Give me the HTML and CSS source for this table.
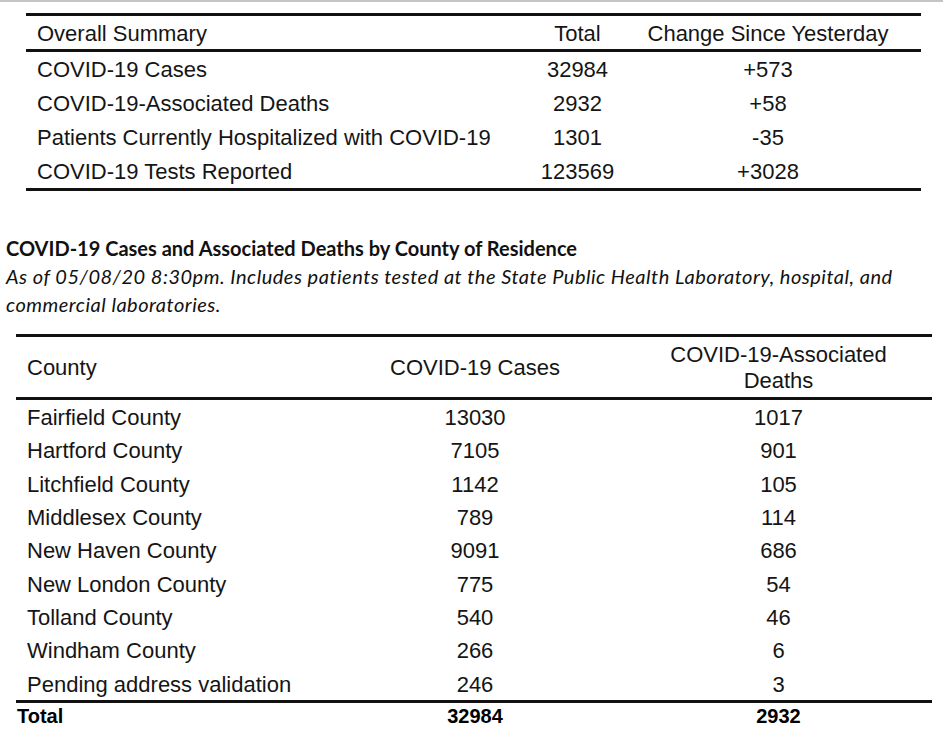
FILE: index.html
```html
<!DOCTYPE html>
<html>
<head>
<meta charset="utf-8">
<link rel="stylesheet" href="styles.css">
</head>
<body>
<div class="page">
  <table class="summary">
    <colgroup>
      <col class="s-c1"><col class="s-c2"><col class="s-c3">
    </colgroup>
    <thead>
      <tr><th class="name">Overall Summary</th><th>Total</th><th>Change Since Yesterday</th></tr>
    </thead>
    <tbody>
      <tr><td class="name">COVID-19 Cases</td><td>32984</td><td>+573</td></tr>
      <tr><td class="name">COVID-19-Associated Deaths</td><td>2932</td><td>+58</td></tr>
      <tr><td class="name">Patients Currently Hospitalized with COVID-19</td><td>1301</td><td>-35</td></tr>
      <tr><td class="name">COVID-19 Tests Reported</td><td>123569</td><td>+3028</td></tr>
    </tbody>
  </table>

  <div class="caption">
    <div class="caption-title">COVID-19 Cases and Associated Deaths by County of Residence</div>
    <div class="caption-note">As of 05/08/20 8:30pm. Includes patients tested at the State Public Health Laboratory, hospital, and commercial laboratories.</div>
  </div>

  <table class="county">
    <colgroup>
      <col class="c-c1"><col class="c-c2"><col class="c-c3">
    </colgroup>
    <thead>
      <tr><th class="name">County</th><th>COVID-19 Cases</th><th>COVID-19-Associated<br>Deaths</th></tr>
    </thead>
    <tbody>
      <tr><td class="name">Fairfield County</td><td>13030</td><td>1017</td></tr>
      <tr><td class="name">Hartford County</td><td>7105</td><td>901</td></tr>
      <tr><td class="name">Litchfield County</td><td>1142</td><td>105</td></tr>
      <tr><td class="name">Middlesex County</td><td>789</td><td>114</td></tr>
      <tr><td class="name">New Haven County</td><td>9091</td><td>686</td></tr>
      <tr><td class="name">New London County</td><td>775</td><td>54</td></tr>
      <tr><td class="name">Tolland County</td><td>540</td><td>46</td></tr>
      <tr><td class="name">Windham County</td><td>266</td><td>6</td></tr>
      <tr><td class="name">Pending address validation</td><td>246</td><td>3</td></tr>
    </tbody>
    <tfoot>
      <tr><td class="name">Total</td><td>32984</td><td>2932</td></tr>
    </tfoot>
  </table>
</div>
</body>
</html>
```

FILE: styles.css
```css
html, body {
  margin: 0;
  padding: 0;
  background: #ffffff;
}

body {
  font-family: "Liberation Sans", Arial, sans-serif;
  color: #151515;
}

.page {
  border-top: 2px solid #c4c4c4;
  height: 735px;
  overflow: hidden;
}

table {
  border-collapse: separate;
  border-spacing: 0;
  table-layout: fixed;
}

th, td {
  padding: 0;
  font-weight: normal;
  text-align: center;
  white-space: nowrap;
}

/* ---------- Summary table ---------- */
.summary {
  margin: 11px 0 0 26px;
  width: 895px;
  font-size: 22px;
}

.s-c1 { width: 514px; }
.s-c2 { width: 75px; }
.s-c3 { width: 306px; }

.summary th {
  border-top: 3px solid #111;
  border-bottom: 3px solid #111;
  padding-top: 2px;
  line-height: 31px;
}

.summary td {
  padding-top: 2px;
  line-height: 32px;
}

.summary tbody tr:last-child td {
  border-bottom: 3px solid #111;
}

.summary .name {
  text-align: left;
  padding-left: 11px;
}

/* ---------- Caption ---------- */
.caption {
  margin: 43px 0 0 6px;
  font-family: "Lato", "Open Sans", sans-serif;
  font-size: 20px;
  line-height: 28px;
  color: #111;
}

.caption-title {
  font-weight: bold;
}

.caption-note {
  font-style: italic;
  letter-spacing: 0.5px;
  width: 910px;
}

/* ---------- County table ---------- */
.county {
  margin: 16px 0 0 16px;
  width: 916px;
  font-size: 22px;
}

.c-c1 { width: 309px; }
.c-c2 { width: 300px; }
.c-c3 { width: 307px; }

.county thead th {
  border-top: 3px solid #111;
  border-bottom: 3px solid #111;
  height: 58px;
  padding-top: 2px;
  line-height: 26px;
  vertical-align: middle;
}

.county tbody td {
  height: 31.33px;
  padding-top: 2px;
  line-height: 31px;
}

.county .name {
  text-align: left;
  padding-left: 11px;
}

.county tfoot td {
  border-top: 3px solid #111;
  font-weight: bold;
  font-size: 20px;
  height: 27px;
  line-height: 27px;
  color: #000;
}

.county tfoot .name {
  padding-left: 1px;
}
```
